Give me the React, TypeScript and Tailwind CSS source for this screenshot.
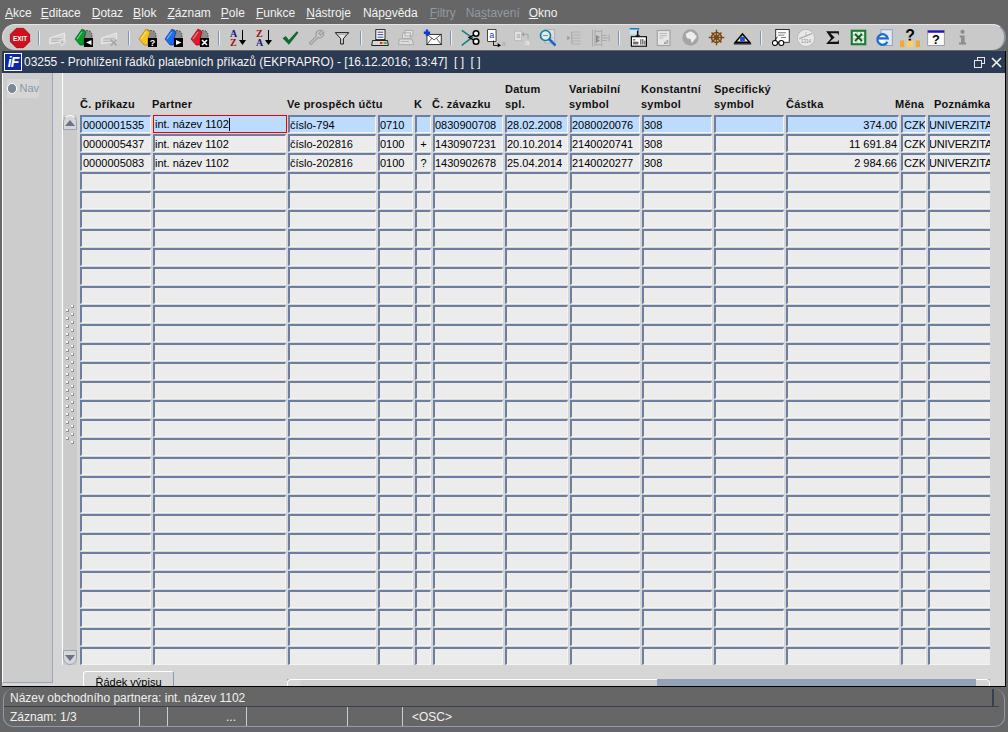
import React from "react";

const Sep = () => (
  <div className="w-[12px] h-[24px] flex items-center justify-center">
    <div className="w-[2px] h-[14px] bg-[#eef2f6] border-l border-[#7f93b2]" />
  </div>
);

const I = ({ s = 18, children }: { s?: number; children?: React.ReactNode }) => (
  <svg width={s} height={s} viewBox="0 0 24 24">{children}</svg>
);

const Cards = ({ c, d, glyph }: { c: string; d: string; glyph?: React.ReactNode }) => (
  <svg width="20" height="20" viewBox="0 0 20 20">
    <path d="M9 2 L16 3 L18 6 L18 11 L11 11 Z" fill="#8c8c8c" stroke="#444" strokeWidth="0.8" strokeDasharray="2 1" />
    <path d="M1 11 L8 1 L12 4 L10 11 L10 17 L6 17 Z" fill={c} stroke={d} strokeWidth="0.7" />
    <path d="M3 11 L8 4" stroke="#fff" strokeOpacity="0.45" strokeWidth="1.2" />
    <rect x="10" y="10" width="9" height="9" fill="#000" />
    {glyph}
  </svg>
);

const Sort = ({ top, bottom, c1, c2 }: { top: string; bottom: string; c1: string; c2: string }) => (
  <div className="w-[16px] h-[18px] relative flex flex-col items-start text-[10px] leading-[9px] font-bold font-['Liberation_Serif',serif]">
    <span style={{ color: c1 }}>{top}</span>
    <span style={{ color: c2 }}>{bottom}</span>
    <svg className="absolute right-[0px] top-[1px]" width="7" height="16" viewBox="0 0 7 16">
      <path d="M3.5 0 V12" stroke="#000" strokeWidth="1" />
      <path d="M0 10 H7 L3.5 15 Z" fill="#000" />
    </svg>
  </div>
);

const icons: Record<string, React.ReactNode> = {
  exit: (
    <I s={22}>
      <path d="M8 1.5 H16 L22.5 8 V16 L16 22.5 H8 L1.5 16 V8 Z" fill="#d0101c" stroke="#a00c14" strokeWidth="1" />
      <text x="12" y="15" textAnchor="middle" fontSize="7" fontWeight="700" fill="#fff" fontFamily="Liberation Sans">EXIT</text>
    </I>
  ),
  add: <I s={20}><path d="M2 12 L20 6 V16 L2 19 Z" fill="#d8d8d8" stroke="#eee" /><path d="M4 13 H18 M4 16 H14" stroke="#a8a8a8" /><path d="M17 13 V21 M13 17 H21" stroke="#ededed" strokeWidth="3" /><path d="M17 14 V20 M14 17 H20" stroke="#a4a4a4" strokeWidth="1" /></I>,
  green: <Cards c="#0c9a2c" d="#045c18" glyph={<path d="M17.5 12 L12 14.5 L17.5 17 Z" fill="#fff" />} />,
  del: <I s={20}><path d="M2 12 L20 6 V16 L2 19 Z" fill="#d8d8d8" stroke="#eee" /><path d="M4 13 H18 M4 16 H14" stroke="#a8a8a8" /><path d="M13 14 L20 21 M20 14 L13 21" stroke="#a4a4a4" strokeWidth="2" /></I>,
  yellow: <Cards c="#f6c21c" d="#a07a08" glyph={<text x="14.5" y="18" textAnchor="middle" fontSize="9" fontWeight="700" fill="#fff" fontFamily="Liberation Sans">?</text>} />,
  blue: <Cards c="#1c6cf0" d="#0c3a90" glyph={<path d="M12 12 L17.5 14.5 L12 17 Z" fill="#fff" />} />,
  red: <Cards c="#e01c2c" d="#800a14" glyph={<path d="M12 12 L17 17 M17 12 L12 17" stroke="#fff" strokeWidth="1.6" />} />,
  az: <Sort top="A" bottom="Z" c1="#16167c" c2="#a01010" />,
  za: <Sort top="Z" bottom="A" c1="#a01010" c2="#16167c" />,
  check: <I s={19}><path d="M2 13 L6 10 L10 15 L20 4 L22 6 L10 21 Z" fill="#0c6a2a" /></I>,
  wrench: <I s={19}><path d="M5 21 L3 19 L12 10 C10 5 14 2 19 3 L15 7 L17 9 L21 5 C22 10 18 14 14 12 Z" fill="none" stroke="#9c9c9c" strokeWidth="1.4" /></I>,
  filter: <I s={16}><path d="M2 4 H22 L14 13 V21 H10 V13 Z" fill="#e8e8e8" stroke="#111" strokeWidth="1.5" /><path d="M5 6.5 H19" stroke="#888" /></I>,
  print: <I s={20}><rect x="7" y="2" width="11" height="12" fill="#fff" stroke="#000" /><path d="M9 5 H16 M9 8 H16 M9 11 H16" stroke="#16167c" /><path d="M3 15 H21 L22 21 H2 Z" fill="#d8d8d8" stroke="#000" /><path d="M12 18 H15" stroke="#d01010" strokeWidth="2" /><path d="M15 18 H17" stroke="#e0c010" strokeWidth="2" /><path d="M17 18 H20" stroke="#10a020" strokeWidth="2" /></I>,
  prints: <I s={19}><path d="M10 3 H20 V10 H10 Z M7 6 H17 V13 H7 Z" fill="#e4e4e4" stroke="#a0a0a0" /><path d="M3 14 H19 L21 21 H2 Z" fill="#dcdcdc" stroke="#a0a0a0" /><path d="M5 17 H15" stroke="#a8a8a8" /></I>,
  mail: <I s={19}><rect x="5" y="8" width="18" height="13" fill="#fff" stroke="#000" /><path d="M5 8 L14 15 L23 8 M5 21 L11 13 M23 21 L17 13" fill="none" stroke="#000" strokeWidth="0.8" /><path d="M5 2 V10 M1 6 H9" stroke="#0c3ad8" strokeWidth="3" /></I>,
  cut: <I s={19}><path d="M1 3 L14 12 L1 22" fill="none" stroke="#1c7a78" strokeWidth="2" /><path d="M1 5 L14 14 L3 22" fill="none" stroke="#9cc" strokeWidth="0.8" /><circle cx="19" cy="7" r="3.5" fill="#fff" stroke="#000" strokeWidth="2" /><circle cx="19" cy="17" r="3.5" fill="#fff" stroke="#000" strokeWidth="2" /><path d="M16 9 L10 12 L16 15" fill="none" stroke="#000" strokeWidth="1.5" /></I>,
  copy: <I s={20}><rect x="2" y="2" width="10" height="14" fill="#fff" stroke="#000" strokeWidth="0.8" /><text x="7" y="12" textAnchor="middle" fontSize="10" fill="#1c1cc8" fontFamily="Liberation Sans">a</text><path d="M9 15 V21 H14" fill="none" stroke="#000" /><path d="M14 18 L18 21 L14 23 Z" fill="#000" /><text x="21" y="22" textAnchor="middle" fontSize="8" fill="#a8a8a8" fontFamily="Liberation Sans">a</text></I>,
  replace: <I s={19}><rect x="2" y="4" width="9" height="12" fill="#e2e2e2" stroke="#b4b4b4" /><text x="6.5" y="13" textAnchor="middle" fontSize="9" fill="#a4a4a4" fontFamily="Liberation Sans">a</text><text x="18" y="22" textAnchor="middle" fontSize="10" fill="#eee" fontFamily="Liberation Sans">a</text><path d="M11 8 H19 V14" fill="none" stroke="#9c9c9c" /><path d="M11 8 L14 5 V11 Z" fill="#9c9c9c" /></I>,
  search: <I s={20}><rect x="8" y="2" width="12" height="16" fill="#ddd" stroke="#aaa" /><path d="M11 15 H18 M11 12 H18" stroke="#aaa" /><circle cx="9" cy="9" r="6" fill="#d4f0f4" stroke="#1c7a98" strokeWidth="2" /><path d="M13.5 13.5 L21 21" stroke="#1c66c8" strokeWidth="3" /><path d="M6 9 H12" stroke="#777" /></I>,
  tree1: <I s={18}><path d="M9 4 V20" stroke="#999" /><path d="M9 4 H21 M9 8 H21 M9 12 H21 M9 16 H21 M9 20 H21" stroke="#aaa" /><path d="M3 9 L7 12 L3 15 Z" fill="#999" /></I>,
  tree2: <I s={20}><path d="M3 2 V22 M6 2 V22 M14 2 V22 M23 8 V16" stroke="#a4a4a4" /><path d="M6 4 H14 M6 20 H14 M14 12 H22 M14 9 H20 M14 15 H20" stroke="#a4a4a4" /><path d="M7 8 L12 11 L7 14 Z M7 12 L12 15 L7 18 Z" fill="#8c8c8c" /></I>,
  form: <I s={19}><rect x="1" y="1" width="12" height="7" fill="#c8e8f4" /><path d="M1 1 H13" stroke="#1c7ac8" strokeWidth="2" /><path d="M12 2 V9 H14 L11 13 L8 9 H10 V4" fill="#111" /><rect x="3" y="11" width="19" height="12" fill="#fff" stroke="#000" strokeWidth="1.4" /><path d="M5 15 H8 M5 18 H12 M5 20 H12 M15 14 V21 M17.5 14 V21 M20 16 V21" stroke="#000" /></I>,
  doc: <I s={18}><rect x="3" y="2" width="17" height="20" fill="#e6e6e6" stroke="#a4a4a4" strokeWidth="1.6" /><path d="M6 6 H16 M6 9 H16 M6 12 H11" stroke="#a8a8a8" /><path d="M12 19 L17 15 V19 Z" fill="none" stroke="#808080" /></I>,
  globe: <I s={17}><circle cx="12" cy="12" r="11.5" fill="#a4a4a4" /><path d="M5 7 L12 3 L17 6 L21 11 L17 16 L14 20 L12 14 L7 13 Z" fill="#eeeeee" /></I>,
  wheel: <I s={17}><circle cx="12" cy="12" r="7" fill="none" stroke="#7a4810" strokeWidth="2" /><circle cx="12" cy="12" r="2.5" fill="none" stroke="#7a4810" strokeWidth="1.8" /><path d="M12 1 V23 M1 12 H23 M5 5 L19 19 M19 5 L5 19" stroke="#7a4810" strokeWidth="2" /></I>,
  home: <I s={19}><path d="M3 3 L7 7 M12 0 V4 M21 3 L17 7" stroke="#e8e040" /><path d="M1 19 L12 6 L23 19 Z" fill="#000" /><path d="M5 17 L12 9 L19 17 Z" fill="#f4f0a0" /><rect x="9" y="11" width="6" height="6" fill="#1c50d8" /><path d="M1 20 H23" stroke="#000" strokeWidth="1.5" /></I>,
  glasses: <I s={19}><rect x="6" y="2" width="17" height="16" fill="#fff" stroke="#000" /><path d="M9 6 H19 M9 9 H17 M13 12 H19" stroke="#555" /><circle cx="5" cy="19" r="3.2" fill="#fff" stroke="#000" strokeWidth="1.3" /><circle cx="13" cy="19" r="3.2" fill="#fff" stroke="#000" strokeWidth="1.3" /><path d="M8 19 H10 M5 16 L8 11" stroke="#000" /></I>,
  calc: <I s={18}><circle cx="12" cy="12" r="11.5" fill="#e8e8e8" stroke="#b0b0b0" /><path d="M3 13 L20 6" stroke="#a0a0a0" strokeWidth="1.4" /><path d="M12 4 V10" stroke="#b0b0b0" /><text x="12" y="19" textAnchor="middle" fontSize="6" fill="#909090" fontFamily="Liberation Sans">1314</text></I>,
  sigma: <I s={17}><path d="M3 3 H21 V9 L19 6 H9 L15 12 L8 18 H19 L21 15 V21 H3 L10 13 Z" fill="#111" /></I>,
  excel: <I s={17}><rect x="1" y="1" width="22" height="22" fill="#1c7a34" /><rect x="4" y="4" width="16" height="16" fill="#e4f4e4" /><path d="M4 9 H20 M4 14 H20 M10 4 V20 M15 4 V20" stroke="#7ab48a" /><path d="M7 7 L17 17 M17 7 L7 17" stroke="#0c5a24" strokeWidth="2.4" /></I>,
  ie: <I s={18}><rect x="8" y="1" width="15" height="21" fill="#dfe8f4" stroke="#7a90b0" /><path d="M16.5 17 A7 7 0 1 1 17 12.5 H4" fill="#fff" stroke="#1c6cd0" strokeWidth="3" /></I>,
  helpb: <I s={20}><text x="12" y="15" textAnchor="middle" fontSize="19" fontWeight="700" fill="#000" fontFamily="Liberation Sans">?</text><rect x="0" y="15" width="5" height="8" fill="#f0a830" /><rect x="8" y="15" width="8" height="8" fill="#f8d070" /><rect x="19" y="15" width="5" height="8" fill="#f0a830" /></I>,
  helpw: <I s={18}><rect x="1" y="2" width="22" height="20" fill="#fff" stroke="#888" /><rect x="1" y="2" width="22" height="3" fill="#1c10c8" /><text x="12" y="20" textAnchor="middle" fontSize="17" fontWeight="700" fill="#000" fontFamily="Liberation Sans">?</text></I>,
  info: <I s={17}><circle cx="12" cy="4" r="3" fill="#8c8c8c" /><path d="M8 9 H15 V19 H17 V22 H7 V19 H10 V12 H8 Z" fill="#8c8c8c" /></I>,
};

const toolbar: (string | null)[] = [
  "exit", null, "add", "green", "del", null, "yellow", "blue", "red", null, "az", "za", "check", "wrench", "filter", null,
  "print", "prints", "mail", null, "cut", "copy", "replace", "search", "tree1", "tree2", null, "form", "doc", "globe", "wheel", "home", null,
  "glasses", "calc", "sigma", "excel", "ie", "helpb", "helpw", "info",
];

const menu: { pre: string; u: string; post: string; ml: string; off?: boolean }[] = [
  { pre: "", u: "A", post: "kce", ml: "ml-0" },
  { pre: "", u: "E", post: "ditace", ml: "ml-[9px]" },
  { pre: "", u: "D", post: "otaz", ml: "ml-[11px]" },
  { pre: "", u: "B", post: "lok", ml: "ml-[10px]" },
  { pre: "", u: "Z", post: "áznam", ml: "ml-[11px]" },
  { pre: "", u: "P", post: "ole", ml: "ml-[10px]" },
  { pre: "", u: "F", post: "unkce", ml: "ml-[11px]" },
  { pre: "", u: "N", post: "ástroje", ml: "ml-[11px]" },
  { pre: "Náp", u: "o", post: "věda", ml: "ml-[12px]" },
  { pre: "", u: "F", post: "iltry", ml: "ml-[12px]", off: true },
  { pre: "Na", u: "s", post: "tavení", ml: "ml-[10px]", off: true },
  { pre: "", u: "O", post: "kno", ml: "ml-[9px]" },
];

const cols = "grid-cols-[73px_135px_90px_37px_18px_72px_65px_72px_72px_72px_115px_27px_64px]";

const headers: { t: React.ReactNode; c?: string }[] = [
  { t: "Č. příkazu" },
  { t: "Partner", c: "-ml-[1px]" },
  { t: "Ve prospěch účtu", c: "-ml-[1px]" },
  { t: "" },
  { t: "K", c: "-ml-[1px]" },
  { t: "Č. závazku", c: "-ml-[1px]" },
  { t: <>Datum<br />spl.</> },
  { t: <>Variabilní<br />symbol</>, c: "-ml-[1px]" },
  { t: <>Konstantní<br />symbol</>, c: "-ml-[1px]" },
  { t: <>Specifický<br />symbol</> },
  { t: "Částka" },
  { t: "Měna", c: "-ml-[6px]" },
  { t: "Poznámka", c: "ml-[6px]" },
];

const data = [
  ["0000001535", "int. název 1102", "číslo-794", "0710", "", "0830900708", "28.02.2008", "2080020076", "308", "", "374.00", "CZK", "UNIVERZITA"],
  ["0000005437", "int. název 1102", "číslo-202816", "0100", "+", "1430907231", "20.10.2014", "2140020741", "308", "", "11 691.84", "CZK", "UNIVERZITA"],
  ["0000005083", "int. název 1102", "číslo-202816", "0100", "?", "1430902678", "25.04.2014", "2140020277", "308", "", "2 984.66", "CZK", "UNIVERZITA"],
];
const rows = Array.from({ length: 29 }, (_, i) => data[i] ?? Array.from({ length: 13 }, () => ""));

const Dot = () => <span className="w-[3px] h-[3px] bg-[#f8f8f8] border-r border-b border-[#8f8f8f]" />;

export default function App() {
  return (
    <div className="w-[1008px] h-[732px] bg-[#666666] flex flex-col overflow-hidden font-['Liberation_Sans',Arial,sans-serif] text-[11px] text-black">
      <div className="h-[24px] flex items-center pl-[5px] pt-[2px] text-[12px] text-[#f2f2f2] shrink-0">
        {menu.map((m, i) => (
          <span key={i} className={`${m.ml} ${m.off ? "text-[#8f9aa6]" : ""}`}>
            {m.pre}<span className="underline">{m.u}</span>{m.post}
          </span>
        ))}
      </div>

      <div className="h-[26px] mx-[2px] shrink-0 bg-[#c9c9c9] rounded-[13px] border-t border-l border-[#e4e4e4] border-r-2 border-r-[#8794a8] flex items-center pl-[4px]">
        {toolbar.map((k, i) =>
          k === null ? (
            <Sep key={i} />
          ) : (
            <div key={i} className="w-[26px] h-[24px] flex items-center justify-center">{icons[k]}</div>
          )
        )}
      </div>

      <div className="mt-[1px] mx-[2px] h-[636px] shrink-0 flex flex-col border-r border-b border-black">
        <div className="h-[22px] bg-[#2a3a52] flex items-center shrink-0 text-[#f4f4f4] text-[12px]">
          <div className="ml-[2px] w-[18px] h-[18px] bg-[#0c28a8] border border-white flex items-center justify-center text-white italic font-bold text-[14px] tracking-[-1px]">iF</div>
          <span className="ml-[2px] whitespace-pre tracking-[-0.02px]">03255 - Prohlížení řádků platebních příkazů (EKPRAPRO) - [16.12.2016; 13:47]  [ ]  [ ]</span>
          <div className="ml-auto flex items-center gap-[6px] pr-[3px]">
            <svg width="11" height="11" viewBox="0 0 11 11"><rect x="3.5" y="0.5" width="7" height="6" fill="none" stroke="#e8e8e8" /><rect x="0.5" y="3.5" width="7" height="7" fill="#2a3a52" stroke="#e8e8e8" /></svg>
            <svg width="11" height="11" viewBox="0 0 11 11"><path d="M1 1 L10 10 M10 1 L1 10" stroke="#f4f4f4" strokeWidth="1.6" /></svg>
          </div>
        </div>

        <div className="flex-1 min-h-0 flex bg-[#d6d6d6] overflow-hidden">
          <div className="w-[51px] shrink-0 mb-[3px] bg-[#cccccc] border-l border-white border-r border-r-[#98a5b8] border-b border-b-[#98a5b8] flex flex-col pt-[6px] pl-[4px]">
            <div className="w-[32px] h-[19px] bg-[#d6d6d6] flex items-center gap-[2px] text-[#8a97aa]">
              <span className="w-[11px] h-[11px] rounded-full bg-[#7c8796] border border-white" />
              <span>Nav</span>
            </div>
          </div>

          <div className="flex-1 min-w-0 flex flex-col">
            <div className="flex-1 min-h-0 flex">
              <div className="w-[10px] shrink-0 border-r border-white" />
              <div className="w-[14px] shrink-0 mt-[42px] h-[550px] bg-[#cbcbcb] flex flex-col items-stretch">
                <div className="h-[15px] bg-[#d6d6d6] border border-[#98a5b8] border-t-white rounded-t-[7px] flex items-center justify-center">
                  <svg width="10" height="6" viewBox="0 0 10 6"><path d="M0 6 L5 0 L10 6 Z" fill="#66748a" /></svg>
                </div>
                <div className="mt-[175px] mb-auto flex justify-center gap-[2px]">
                  <div className="flex flex-col gap-[5px] pt-[4px]">
                    {Array.from({ length: 17 }).map((_, i) => <Dot key={i} />)}
                  </div>
                  <div className="flex flex-col gap-[5px]">
                    {Array.from({ length: 18 }).map((_, i) => <Dot key={i} />)}
                  </div>
                </div>
                <div className="h-[15px] bg-[#d6d6d6] border border-[#98a5b8] rounded-b-[7px] flex items-center justify-center">
                  <svg width="10" height="6" viewBox="0 0 10 6"><path d="M0 0 L10 0 L5 6 Z" fill="#66748a" /></svg>
                </div>
              </div>

              <div className="w-[913px] shrink-0 pl-[3px] flex flex-col overflow-hidden">
                <div className={`h-[43px] grid ${cols} items-end font-bold leading-[15px] tracking-[0.25px] text-[#111] pb-[3px]`}>
                  {headers.map((h, i) => (
                    <div key={i} className={`whitespace-nowrap ${h.c ?? ""}`}>{h.t}</div>
                  ))}
                </div>
                <div className="flex flex-col gap-[1px]">
                  {rows.map((r, ri) => (
                    <div key={ri} className={`grid ${cols} h-[18px]`}>
                      {r.map((v, ci) => {
                        const active = ri === 0 && ci === 1;
                        const sel = ri === 0;
                        const pad = ci === 0 || ci === 11 ? "pl-[1px]" : "";
                        return (
                          <div
                            key={ci}
                            className={`h-[18px] flex items-center overflow-hidden whitespace-nowrap pt-[1px] ${
                              active
                                ? "mr-[1px] border border-[#ee0000] bg-[#bddcfd] pl-[1px]"
                                : `${ci === 12 ? "mr-0" : "mr-[2px]"} border-t-2 border-l-2 border-[#6d7fa0] border-r border-b border-r-[#f4f4f4] border-b-[#f4f4f4] ${pad} ${sel ? "bg-[#bddcfd]" : "bg-[#ececec]"}`
                            } ${ci === 10 ? "justify-end pr-[1px]" : ""} ${ci === 4 ? "justify-center" : ""}`}
                          >
                            <span className={ci === 12 ? "-ml-[1px] tracking-[-0.15px]" : ""}>{v}</span>
                            {active && <span className="w-[1px] h-[13px] bg-black" />}
                          </div>
                        );
                      })}
                    </div>
                  ))}
                </div>
              </div>
            </div>

            <div className="h-[21px] shrink-0 flex items-end">
              <div className="ml-[30px] w-[91px] h-[15px] overflow-hidden border-t border-l border-r border-t-white border-l-white border-r-[#8a9ab0] rounded-t-[3px] flex items-start justify-center pt-[2px]">Řádek výpisu</div>
              <div className="ml-[113px] w-[703px] h-[7px] bg-[#94a2b8] flex items-stretch">
                <div className="w-[14px] bg-[#d6d6d6] border-t border-l border-white rounded-tl-[4px]" />
                <div className="w-[356px] bg-[#cfcfcf] border-t border-white" />
                <div className="ml-auto w-[14px] bg-[#d6d6d6] border-t border-r border-white rounded-tr-[4px]" />
              </div>
            </div>
          </div>
        </div>
      </div>

      <div className="flex-1 mx-[3px] mt-[2px] mb-[6px] border border-t-0 border-[#8d9bb0] rounded-[10px] flex flex-col text-[#f0f0f0] text-[12px]">
        <div className="h-[18px] border-b border-[#38424f] flex items-center pl-[6px] mr-[5px] shrink-0">
          <span>Název obchodního partnera: int. název 1102</span>
          <div className="ml-auto w-[2px] h-full bg-[#38424f] mr-[5px]" />
        </div>
        <div className="flex-1 flex items-center">
          <div className="w-[136px] pl-[6px] h-full flex items-center border-r border-[#c4cedb] pt-[1px]">Záznam: 1/3</div>
          <div className="w-[28px] h-full border-r border-[#c4cedb]" />
          <div className="w-[79px] h-full flex items-center justify-end pr-[10px] border-r border-[#c4cedb] pt-[1px]">...</div>
          <div className="w-[101px] h-full border-r border-[#c4cedb]" />
          <div className="w-[55px] h-full border-r border-[#c4cedb]" />
          <div className="pl-[9px] pt-[1px]">&lt;OSC&gt;</div>
        </div>
      </div>
    </div>
  );
}
